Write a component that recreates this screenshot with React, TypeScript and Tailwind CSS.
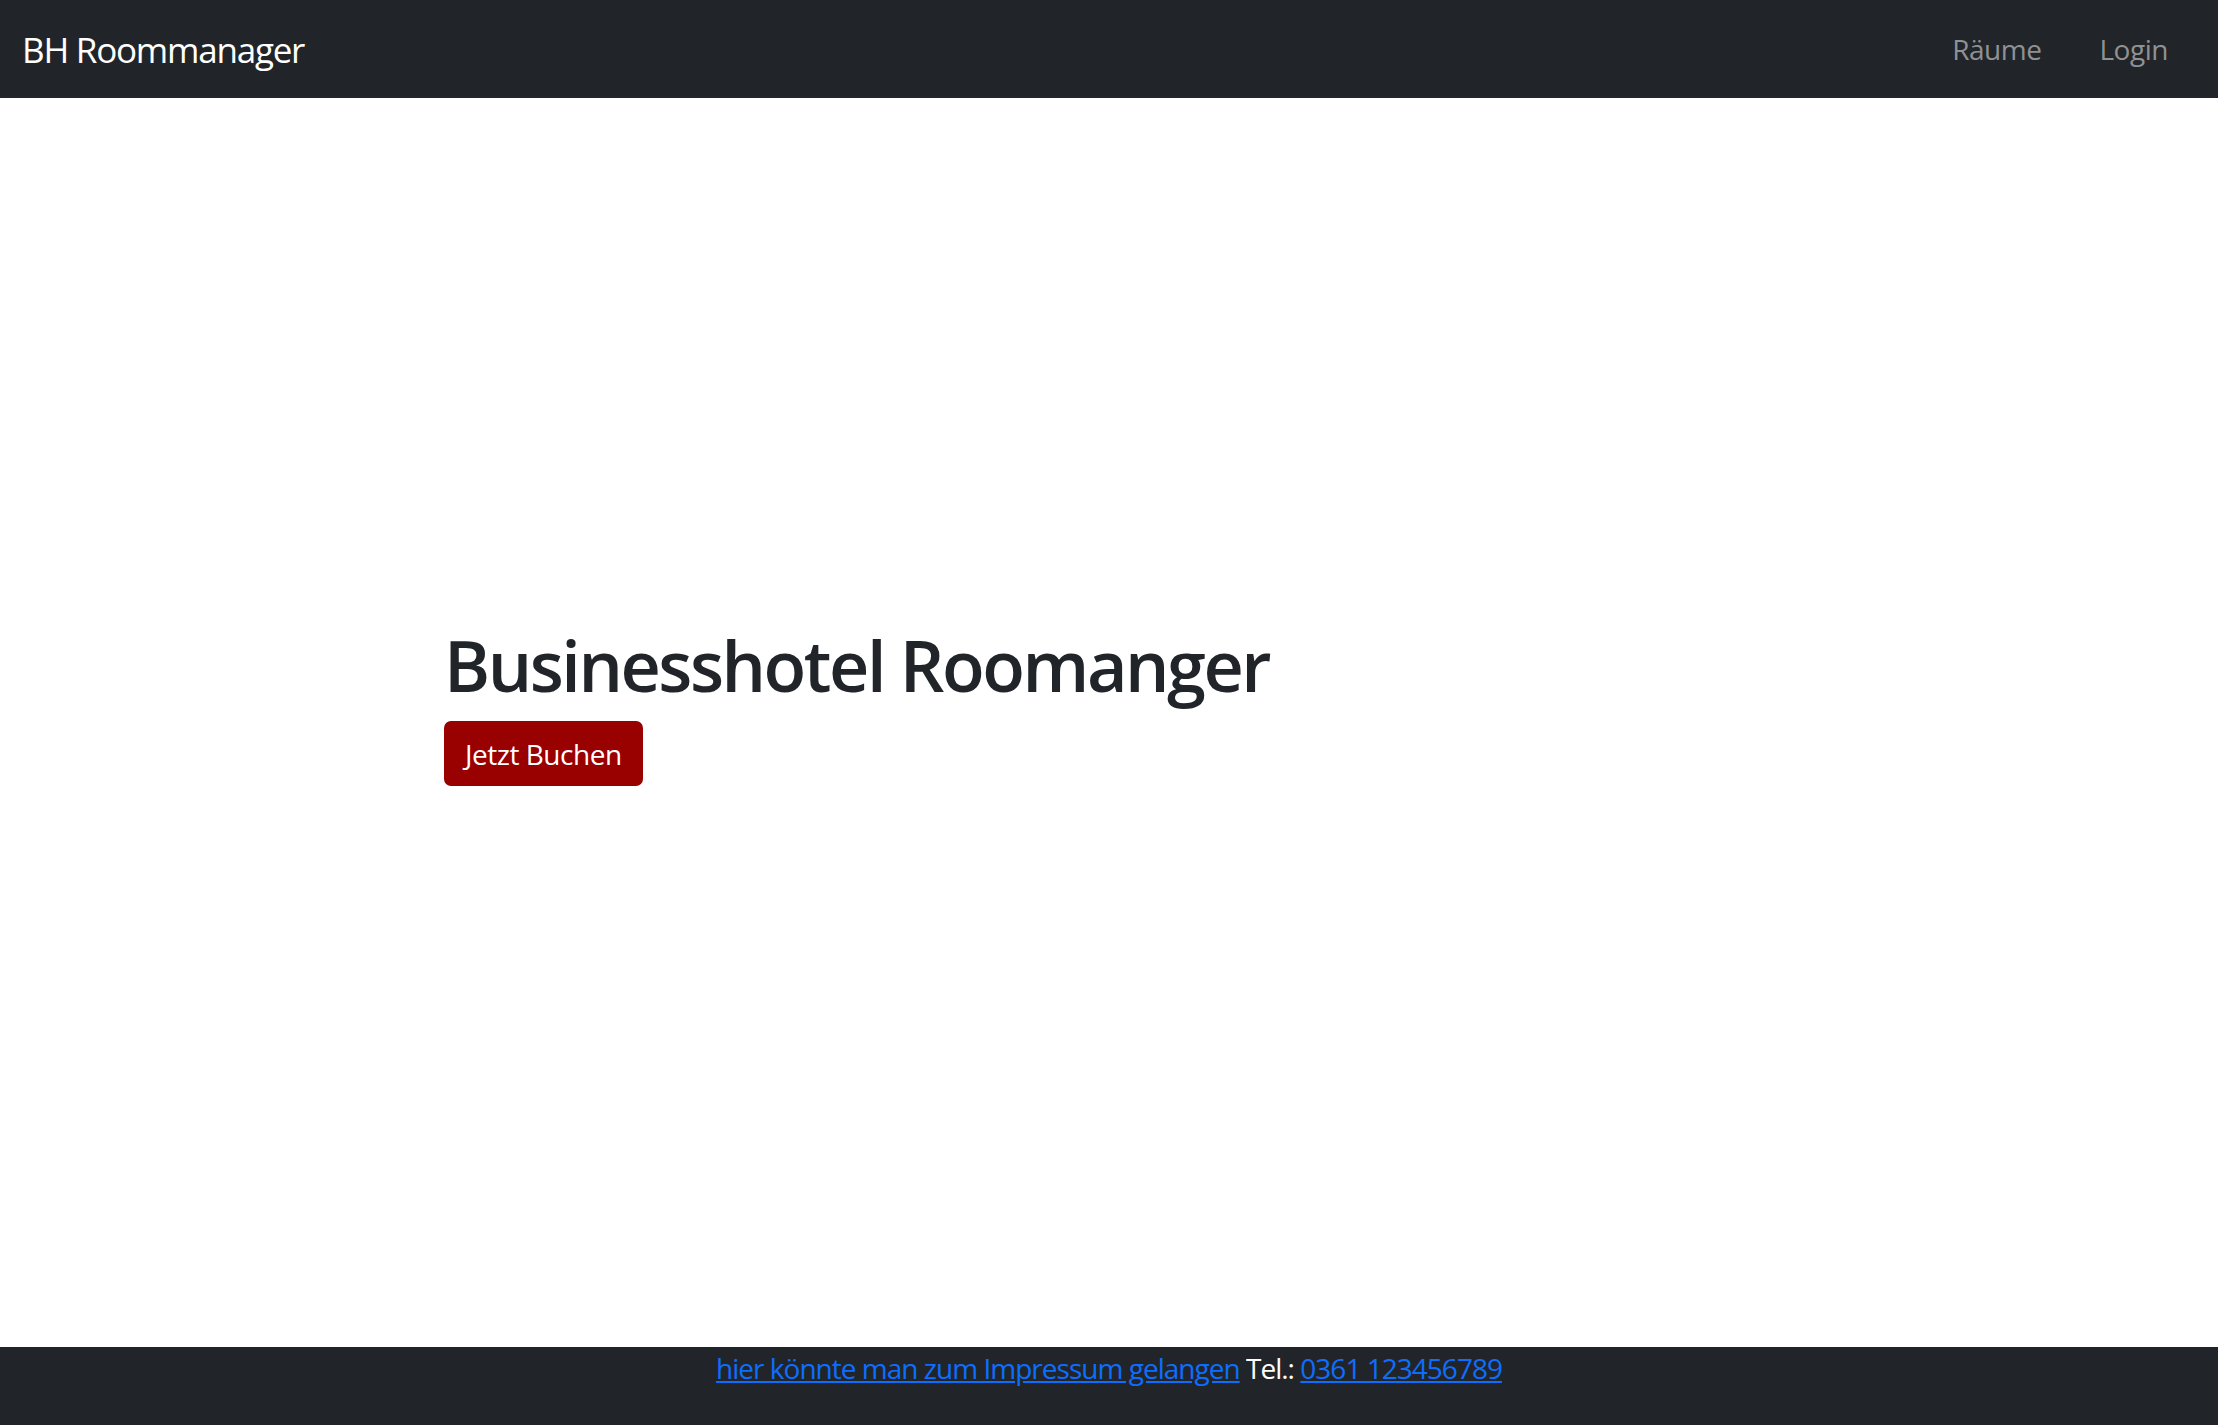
export default function App() {
  return (
    <div
      className="flex h-[1425px] w-full flex-col bg-white tracking-[-0.03em]"
      style={{ fontFamily: '"Open Sans", "Noto Sans", sans-serif' }}
    >
      {/* Navbar */}
      <nav className="flex h-[98px] items-center justify-between bg-[#212529] pl-[22px] pr-[36px]">
        <a href="#" className="text-[35px] leading-none tracking-[-0.035em] text-white">
          BH Roommanager
        </a>
        <div className="flex items-center gap-[30px]">
          <a href="#" className="px-[14px] text-[28px] text-[#8f9194]">
            Räume
          </a>
          <a href="#" className="px-[14px] text-[28px] text-[#8f9194]">
            Login
          </a>
        </div>
      </nav>

      {/* Hero */}
      <main className="flex flex-1 flex-col justify-center pb-[36px] pl-[444px]">
        <h1 className="mb-[14px] text-[70px] font-semibold leading-[84px] tracking-[-0.035em] text-[#212529]">
          Businesshotel Roomanger
        </h1>
        <div>
          <button className="h-[65px] rounded-[7px] bg-[#990000] px-[21px] text-[28px] text-white">
            Jetzt Buchen
          </button>
        </div>
      </main>

      {/* Footer */}
      <footer className="h-[78px] bg-[#212529] text-center text-[28px] leading-[42px] tracking-[-0.035em] text-white">
        <a href="#" className="text-[#0d6efd] underline">
          hier könnte man zum Impressum gelangen
        </a>{' '}
        Tel.:{' '}
        <a href="#" className="text-[#0d6efd] underline">
          0361 123456789
        </a>
      </footer>
    </div>
  );
}
